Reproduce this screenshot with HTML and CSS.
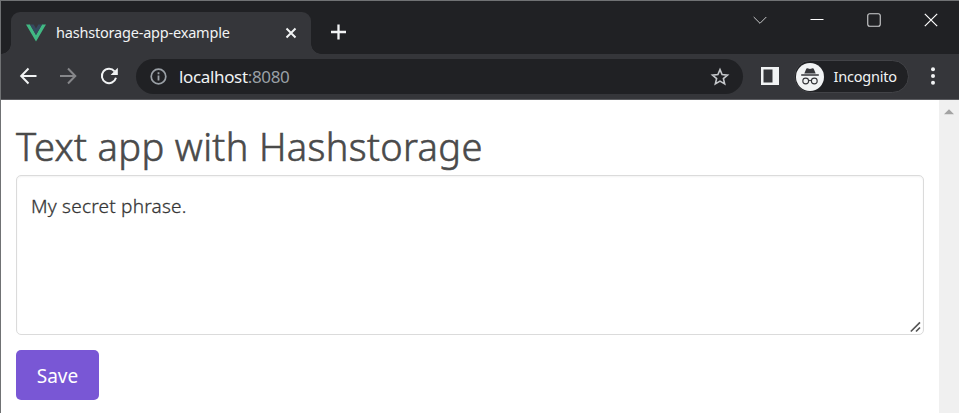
FILE: index.html
```html
<!DOCTYPE html>
<html lang="en">
<head>
<meta charset="utf-8">
<title>hashstorage-app-example</title>
<link rel="stylesheet" href="styles.css">
</head>
<body>
<div class="window">
  <header class="tabstrip">
    <div class="tab">
      <svg class="favicon" width="20" height="18" viewBox="0 0 20 18"><path fill="#41b883" d="M0 .5h4L10 11 16 .5h4L10 17.5z"/><path fill="#35495e" d="M4 .5h3.7L10 4.4 12.3.5H16L10 11z"/></svg>
      <span class="tab-title">hashstorage-app-example</span>
      <svg class="tab-close" width="12" height="12" viewBox="0 0 12 12"><path d="M1.5 1.5l9 9M10.500 1.500l-9 9" stroke="#f1f3f4" stroke-width="2"/></svg>
    </div>
    <svg class="new-tab" width="16" height="16" viewBox="0 0 16 16"><path d="M7.500 .5v15M0 8h15" stroke="#f1f3f4" stroke-width="2.300"/></svg>
    <div class="controls">
      <svg width="14" height="14" viewBox="0 0 14 14"><path d="M.7 4l6.300 6.300L13.300 4" fill="none" stroke="#c8c9ca"/></svg>
      <svg width="14" height="14" viewBox="0 0 14 14"><path d="M.5 6.500h13" stroke="#fff"/></svg>
      <svg width="14" height="14" viewBox="0 0 14 14"><rect x=".75" y=".75" width="12.500" height="12.500" rx="2" fill="none" stroke="#d0d1d2" stroke-width="1.100"/></svg>
      <svg width="14" height="14" viewBox="0 0 14 14"><path d="M.8.8l12.400 12.400M13.200.8L.8 13.200" stroke="#fff" stroke-width="1.200"/></svg>
    </div>
  </header>
  <nav class="toolbar">
    <svg class="back" width="18" height="18" viewBox="0 0 18 18"><path d="M17.500 9H2.500M9.500 1.500L2.200 9 9.500 16.500" fill="none" stroke="#f1f3f4" stroke-width="2"/></svg>
    <svg class="forward" width="18" height="18" viewBox="0 0 18 18"><path d="M1 9h15M9 1.500L16.300 9 9 16.500" fill="none" stroke="#86878a" stroke-width="2"/></svg>
    <svg class="reload" width="18" height="18" viewBox="0 0 18 18"><path d="M14.600 4.300A7.200 7.200 0 1 0 16 10.800" fill="none" stroke="#f1f3f4" stroke-width="2"/><path d="M17.800.8v7.200h-7.200z" fill="#f1f3f4"/></svg>
    <div class="address">
      <svg width="17" height="17" viewBox="0 0 17 17"><circle cx="8.500" cy="8.500" r="7.300" fill="none" stroke="#9aa0a6" stroke-width="1.700"/><path d="M8.500 4.300v1.900M8.500 7.500v5" stroke="#9aa0a6" stroke-width="1.800"/></svg>
      <span class="url">localhost<span class="port">:8080</span></span>
      <svg class="star" width="20" height="20" viewBox="0 0 20 20"><path d="M10 2.600l2.100 5 5.400.5-4.100 3.500 1.250 5.300L10 14.100l-4.650 2.800L6.600 11.600 2.500 8.100l5.400-.5z" fill="none" stroke="#c4c7ca" stroke-width="1.600"/></svg>
    </div>
    <svg class="panel" width="18" height="18" viewBox="0 0 18 18"><path fill="#f1f3f4" fill-rule="evenodd" d="M0 0h18v18H0zM2.500 2.500v13h9v-13z"/></svg>
    <div class="profile">
      <svg width="28" height="28" viewBox="0 0 28 28"><circle cx="14" cy="14" r="14" fill="#f1f3f4"/><path fill="#35363a" d="M5.200 11.300h17.600v1.400H5.200zM8.300 10.500L10.300 5.700q.3-.6 1-.4l2.700.7 2.700-.7q.7-.2 1 .4l2 4.800z"/><g fill="none" stroke="#35363a" stroke-width="1.100"><circle cx="9.700" cy="18" r="2.900"/><circle cx="18.300" cy="18" r="2.900"/><path d="M12.700 17.700q1.300-.9 2.600 0"/></g></svg>
      <span class="profile-name">Incognito</span>
    </div>
    <svg class="menu" width="4" height="18" viewBox="0 0 4 18"><g fill="#f1f3f4"><circle cx="2" cy="2.300" r="2"/><circle cx="2" cy="9" r="2"/><circle cx="2" cy="15.700" r="2"/></g></svg>
  </nav>
  <div class="viewport">
    <main class="page">
      <h1>Text app with Hashstorage</h1>
      <div class="textarea">
        <span class="phrase">My secret phrase.</span>
        <svg class="grip" width="12" height="12" viewBox="0 0 12 12"><path d="M.8 10.500L10 1.300M6 10.500l4-4" stroke="#555" stroke-width="1.700"/></svg>
      </div>
      <button class="save" type="button"><span>Save</span></button>
    </main>
    <div class="scrollbar"><svg width="10" height="6" viewBox="0 0 10 6"><path d="M0 5.300L5 .3l5 5z" fill="#a3a3a3"/></svg></div>
  </div>
</div>
</body>
</html>
```
FILE: styles.css
```css
* { box-sizing: border-box; }
body { margin: 0; overflow: hidden; font-family: "Noto Sans", "Open Sans", sans-serif; }
svg { display: block; flex: none; }
.window { width: 959px; height: 413px; display: flex; flex-direction: column; border-top: 1px solid #707274; border-left: 1px solid #707274; background: #fff; }
.tabstrip { height: 53px; flex: none; display: flex; align-items: flex-start; background: #202124; padding: 11px 21.500px 0 10px; }
.tab { position: relative; width: 300px; height: 42px; display: flex; align-items: center; padding: 0 15px; background: #35363a; border-radius: 9px 9px 0 0; }
.tab::before, .tab::after { content: ""; position: absolute; bottom: 0; width: 10px; height: 10px; }
.tab::before { left: -10px; background: radial-gradient(circle at 0 0, #202124 9.500px, #35363a 10px); }
.tab::after { right: -10px; background: radial-gradient(circle at 100% 0, #202124 9.500px, #35363a 10px); }
.tab-title { margin-left: 10px; margin-top: -2px; color: #f1f3f4; font-size: 14.500px; letter-spacing: -.2px; white-space: nowrap; }
.tab-close { margin-left: auto; margin-right: -1px; }
.new-tab { margin: 12px 0 0 20px; }
.controls { display: flex; gap: 43px; margin: 1px 0 0 auto; }
.toolbar { height: 46px; flex: none; display: flex; align-items: center; padding-left: 18px; background: #35363a; border-bottom: 1px solid #5b5c60; }
.back, .forward, .reload, .panel, .menu { margin-top: -1px; }
.forward { margin-left: 22px; }
.reload { margin-left: 22.500px; }
.address { width: 607px; height: 35px; margin-left: 18.500px; display: flex; align-items: center; padding: 0 13px 0 14px; background: #202124; border-radius: 18px; }
.url { margin-left: 12px; color: #f1f3f4; font-size: 17px; letter-spacing: -.35px; white-space: nowrap; }
.port { color: #9aa0a6; }
.star { margin-left: auto; }
.panel { margin-left: 18px; }
.profile { width: 115px; height: 33px; margin-left: 15px; display: flex; align-items: center; padding-left: .5px; background: #202124; border: 1px solid #424347; border-radius: 17px; }
.profile-name { margin-left: 10px; color: #f1f3f4; font-size: 14.500px; letter-spacing: -.2px; margin-top: -2px; }
.menu { margin-left: 21.500px; }
.viewport { flex: 1; display: flex; min-height: 0; }
.page { flex: 1; padding: 24px 15px 0; }
h1 { margin: 0; height: 51px; line-height: 45px; color: #4a4a4a; font-size: 38px; font-weight: 300; letter-spacing: .37px; -webkit-text-stroke: .6px #4a4a4a; white-space: nowrap; }
.textarea { position: relative; height: 160px; padding: 14px; border: 1px solid #dbdbdb; border-radius: 5px; box-shadow: inset 0 1px 2px rgba(10,10,10,.05); color: #363636; font-size: 19px; line-height: 32px; }
.phrase { font-weight: 300; letter-spacing: .22px; -webkit-text-stroke: .3px #363636; }
.grip { position: absolute; right: 1px; bottom: 1px; }
.save { display: flex; align-items: center; justify-content: center; width: 83px; height: 50px; margin-top: 15px; padding: 2px 0 0; border: 0; border-radius: 5px; background: #7957d5; color: #fff; font-family: inherit; font-size: 19px; }
.scrollbar { width: 20px; flex: none; background: #f0f0f0; padding: 9px 0 0 5px; }
```
